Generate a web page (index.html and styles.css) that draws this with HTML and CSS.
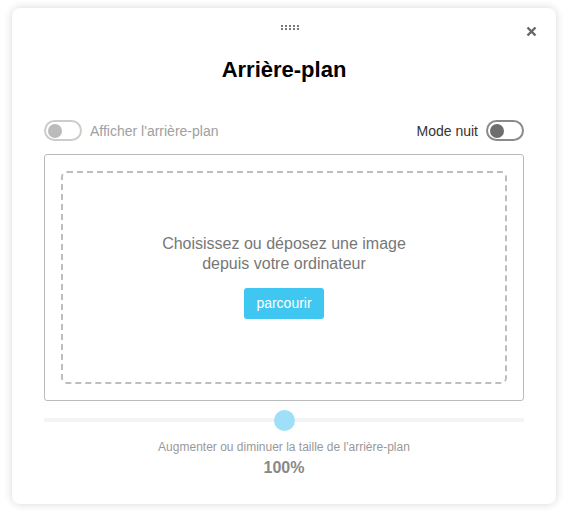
FILE: index.html
```html
<!DOCTYPE html>
<html lang="fr">
<head>
<meta charset="utf-8">
<title>Arrière-plan</title>
<link rel="stylesheet" href="styles.css">
</head>
<body>
<div class="card">
  <div class="handle">
    <span></span><span></span><span></span><span></span><span></span>
    <span></span><span></span><span></span><span></span><span></span>
  </div>
  <button class="close" aria-label="Fermer">
    <svg width="11" height="11" viewBox="0 0 11 11"><path d="M1.5 1.5 L9.5 9.5 M9.5 1.5 L1.5 9.5" stroke="#666" stroke-width="2.4" stroke-linecap="butt"/></svg>
  </button>
  <h1 class="title">Arrière-plan</h1>
  <div class="toggles">
    <label class="toggle-item disabled">
      <span class="switch light"><span class="knob"></span></span>
      <span class="label">Afficher l'arrière-plan</span>
    </label>
    <label class="toggle-item">
      <span class="label dark">Mode nuit</span>
      <span class="switch darkswitch"><span class="knob"></span></span>
    </label>
  </div>
  <div class="dropbox">
    <div class="dropzone">
      <p class="drop-text">Choisissez ou déposez une image<br>depuis votre ordinateur</p>
      <button class="browse">parcourir</button>
    </div>
  </div>
  <div class="slider">
    <div class="track"></div>
    <div class="thumb" style="left: 50%"></div>
  </div>
  <p class="hint">Augmenter ou diminuer la taille de l'arrière-plan</p>
  <p class="value">100%</p>
</div>
</body>
</html>
```
FILE: styles.css
```css
* { box-sizing: border-box; }
html, body { margin: 0; padding: 0; background: #fff; }
body {
  font-family: "Liberation Sans", Arial, sans-serif;
  width: 571px;
  height: 515px;
  overflow: hidden;
}
.card {
  position: relative;
  margin: 8px 0 0 12px;
  width: 544px;
  height: 496px;
  background: #fff;
  border-radius: 8px;
  box-shadow: 0 0 8px rgba(0,0,0,0.16);
  padding: 17px 32px 0;
  display: flex;
  flex-direction: column;
}
.handle {
  align-self: center;
  display: grid;
  grid-template-columns: repeat(5, 2px);
  grid-auto-rows: 2px;
  gap: 1px 2px;
  margin-left: 12px;
}
.handle span { background: #7a7a7a; width: 2px; height: 2px; }
.close {
  position: absolute;
  top: 18px;
  right: 19px;
  width: 11px;
  height: 11px;
  padding: 0;
  border: 0;
  background: none;
  display: block;
}
.close svg { display: block; }
.title {
  margin: 26px 0 0;
  font-size: 22px;
  line-height: 28px;
  font-weight: bold;
  color: #000;
  text-align: center;
}
.toggles {
  margin-top: 36px;
  display: flex;
  justify-content: space-between;
  align-items: center;
  height: 21px;
}
.toggle-item {
  display: flex;
  align-items: center;
  gap: 8px;
}
.switch {
  width: 38px;
  height: 21px;
  border-radius: 11px;
  border: 2px solid #ccc;
  display: flex;
  align-items: center;
  padding-left: 2px;
}
.knob {
  width: 14px;
  height: 14px;
  border-radius: 50%;
  background: #bbb;
}
.darkswitch { border-color: #8a8a8a; }
.darkswitch .knob { background: #6e6e6e; }
.label {
  font-size: 14px;
  color: #a0a0a0;
  line-height: 16px;
}
.label.dark { color: #333; }
.dropbox {
  margin-top: 13px;
  height: 247px;
  border: 1px solid #bbb;
  border-radius: 3px;
  padding: 16px;
}
.dropzone {
  height: 100%;
  border: 2px dashed #bdbdbd;
  border-radius: 6px;
  display: flex;
  flex-direction: column;
  align-items: center;
  justify-content: center;
  padding-bottom: 3px;
}
.drop-text {
  margin: 0;
  font-size: 16px;
  line-height: 20px;
  color: #777;
  text-align: center;
}
.browse {
  margin-top: 14px;
  width: 80px;
  height: 31px;
  border: 0;
  border-radius: 3px;
  background: #3fc6f1;
  color: #fff;
  font-family: "Liberation Sans", Arial, sans-serif;
  font-size: 14px;
  padding: 0;
}
.slider {
  position: relative;
  margin-top: 9px;
  height: 20px;
}
.track {
  position: absolute;
  left: 0;
  right: 0;
  top: 8px;
  height: 4px;
  background: #f4f4f4;
}
.thumb {
  position: absolute;
  top: -0.5px;
  width: 21px;
  height: 21px;
  margin-left: -10.5px;
  border-radius: 50%;
  background: #9fe0f8;
}
.hint {
  margin: 9px 0 0;
  font-size: 12px;
  line-height: 16px;
  color: #999;
  text-align: center;
}
.value {
  margin: 3px 0 0;
  font-size: 16px;
  line-height: 20px;
  font-weight: bold;
  color: #888;
  text-align: center;
}
```
